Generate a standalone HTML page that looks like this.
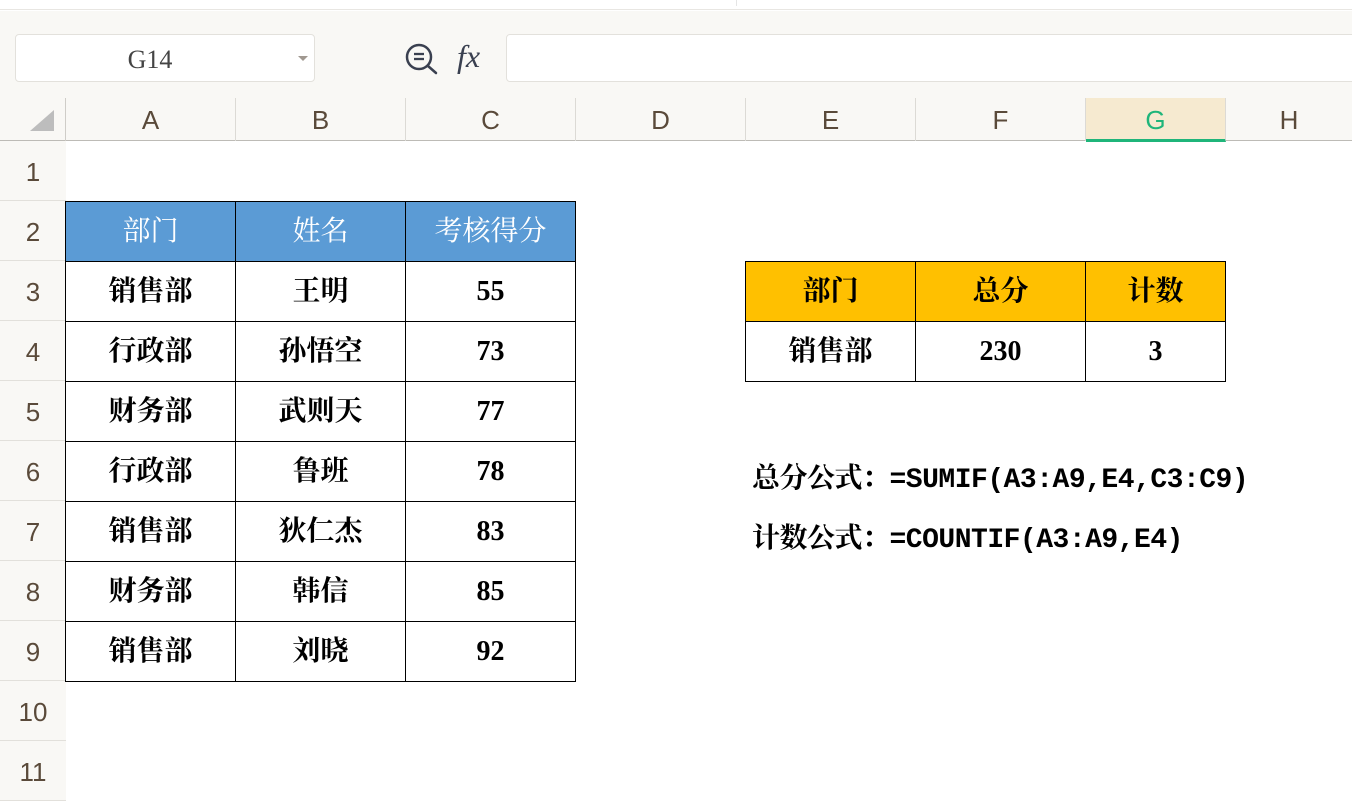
<!DOCTYPE html>
<html><head><meta charset="utf-8"><style>
*{margin:0;padding:0;box-sizing:border-box}
body{width:1352px;height:795px;overflow:hidden;background:#fff;position:relative;font-family:"Liberation Sans","Noto Sans CJK SC",sans-serif}
.a{position:absolute}
.ch{position:absolute;top:98px;height:43px;border-right:1px solid #dcdad5;color:#5a4a3a;font-size:26px;text-align:center;line-height:44px}
.rh{position:absolute;left:0;width:66px;height:60px;border-bottom:1px solid #e2e0db;color:#5a4a3a;font-size:26px;text-align:center;line-height:62px;background:#f9f8f5}
.c{position:absolute;width:171px;height:61px;border:1px solid #000;text-align:center;line-height:60px;font-size:28px;font-family:"Liberation Serif","Noto Serif CJK SC",serif;font-weight:bold;color:#000}
.f{position:absolute;font-size:28px;font-family:"Liberation Mono","Noto Serif CJK SC",serif;font-weight:bold;left:752px;letter-spacing:-0.5px}
</style></head><body>
<div class="a" style="left:0;top:0;width:1352px;height:10px;background:#fff;border-bottom:1px solid #e8e6e2"></div>
<div class="a" style="left:736px;top:0;width:1px;height:6px;background:#e5e5e5"></div>
<div class="a" style="left:0;top:11px;width:1352px;height:87px;background:#f9f8f5"></div>
<div class="a" style="left:15px;top:34px;width:300px;height:48px;background:#fff;border:1px solid #e3e1dc;border-radius:4px;text-align:center;line-height:50px;font-family:'Liberation Serif',serif;font-size:26px;color:#444;padding-right:30px">G14</div>
<div class="a" style="left:298px;top:56px;width:0;height:0;border-left:5px solid transparent;border-right:5px solid transparent;border-top:5px solid #a09890"></div>
<svg class="a" style="left:403px;top:40px" width="38" height="36" viewBox="0 0 38 36"><circle cx="16" cy="17" r="12" fill="none" stroke="#3a4050" stroke-width="2.5"/><line x1="25" y1="26" x2="33" y2="33" stroke="#3a4050" stroke-width="2.5" stroke-linecap="round"/><line x1="11" y1="14" x2="21" y2="14" stroke="#3a4050" stroke-width="2.3"/><line x1="11" y1="19" x2="21" y2="19" stroke="#3a4050" stroke-width="2.3"/></svg>
<div class="a" style="left:457px;top:38px;font-family:'Liberation Serif',serif;font-style:italic;font-size:32px;color:#3a4050">fx</div>
<div class="a" style="left:506px;top:34px;width:860px;height:48px;background:#fff;border:1px solid #e3e1dc;border-radius:4px"></div>
<div class="a" style="left:0;top:98px;width:1352px;height:43px;background:#f9f8f5;border-bottom:1px solid #bdbbb6"></div>
<div class="a" style="left:30px;top:110px;width:0;height:0;border-left:24px solid transparent;border-bottom:21px solid #bdbdbd"></div>
<div class="a" style="left:65px;top:98px;width:1px;height:697px;background:#cfcdc8"></div>
<div class="ch" style="left:66px;width:170px">A</div>
<div class="ch" style="left:236px;width:170px">B</div>
<div class="ch" style="left:406px;width:170px">C</div>
<div class="ch" style="left:576px;width:170px">D</div>
<div class="ch" style="left:746px;width:170px">E</div>
<div class="ch" style="left:916px;width:170px">F</div>
<div class="ch" style="left:1086px;width:140px;background:#f6ead0;color:#1fb57a;border-bottom:3px solid #1fb57a;height:44px">G</div>
<div class="ch" style="left:1226px;width:126px;border-right:none">H</div>
<div class="a" style="left:0;top:142px;width:65px;height:653px;background:#f9f8f5"></div>
<div class="rh" style="top:141px">1</div><div class="rh" style="top:201px">2</div><div class="rh" style="top:261px">3</div><div class="rh" style="top:321px">4</div><div class="rh" style="top:381px">5</div><div class="rh" style="top:441px">6</div><div class="rh" style="top:501px">7</div><div class="rh" style="top:561px">8</div><div class="rh" style="top:621px">9</div><div class="rh" style="top:681px">10</div><div class="rh" style="top:741px">11</div>

<div class="c" style="left:65px;top:201px;background:#5b9bd5;color:#fff;font-weight:normal">部门</div>
<div class="c" style="left:235px;top:201px;background:#5b9bd5;color:#fff;font-weight:normal">姓名</div>
<div class="c" style="left:405px;top:201px;background:#5b9bd5;color:#fff;font-weight:normal">考核得分</div>

<div class="c" style="left:65px;top:261px">销售部</div><div class="c" style="left:235px;top:261px">王明</div><div class="c" style="left:405px;top:261px">55</div>
<div class="c" style="left:65px;top:321px">行政部</div><div class="c" style="left:235px;top:321px">孙悟空</div><div class="c" style="left:405px;top:321px">73</div>
<div class="c" style="left:65px;top:381px">财务部</div><div class="c" style="left:235px;top:381px">武则天</div><div class="c" style="left:405px;top:381px">77</div>
<div class="c" style="left:65px;top:441px">行政部</div><div class="c" style="left:235px;top:441px">鲁班</div><div class="c" style="left:405px;top:441px">78</div>
<div class="c" style="left:65px;top:501px">销售部</div><div class="c" style="left:235px;top:501px">狄仁杰</div><div class="c" style="left:405px;top:501px">83</div>
<div class="c" style="left:65px;top:561px">财务部</div><div class="c" style="left:235px;top:561px">韩信</div><div class="c" style="left:405px;top:561px">85</div>
<div class="c" style="left:65px;top:621px">销售部</div><div class="c" style="left:235px;top:621px">刘晓</div><div class="c" style="left:405px;top:621px">92</div>

<div class="c" style="left:745px;top:261px;background:#ffc000">部门</div>
<div class="c" style="left:915px;top:261px;background:#ffc000">总分</div>
<div class="c" style="left:1085px;top:261px;width:141px;background:#ffc000">计数</div>
<div class="c" style="left:745px;top:321px">销售部</div>
<div class="c" style="left:915px;top:321px">230</div>
<div class="c" style="left:1085px;top:321px;width:141px">3</div>

<div class="f" style="top:456px">总分公式：=SUMIF(A3:A9,E4,C3:C9)</div>
<div class="f" style="top:516px">计数公式：=COUNTIF(A3:A9,E4)</div>
</body></html>
